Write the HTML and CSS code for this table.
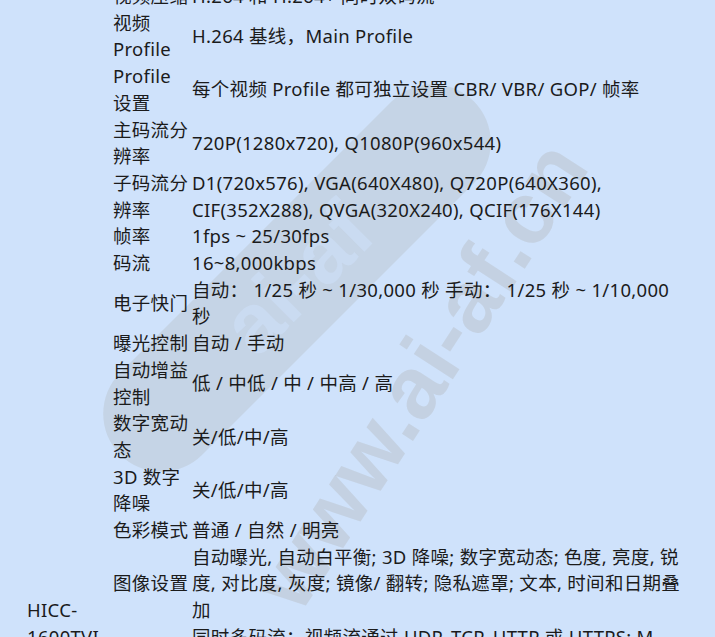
FILE: index.html
```html
<!DOCTYPE html>
<html lang="zh-CN">
<head>
  <meta charset="UTF-8">
  <meta name="viewport" content="width=device-width, initial-scale=1.0">
  <title>HICC-1600TVI 规格</title>
  <link rel="stylesheet" href="styles.css">
</head>
<body>
  <div class="page">
    <div class="watermark" aria-hidden="true">
      <div class="wm-badge"><span>ai-af</span></div>
      <div class="wm-text">www.ai-af.cn</div>
    </div>

    <table class="spec">
      <colgroup>
        <col class="col-model">
        <col class="col-label">
        <col class="col-value">
      </colgroup>
      <tr>
        <td class="model" rowspan="40">HICC-1600TVI</td>
        <td class="label">视频压缩</td>
        <td class="value">H.264 和 H.264+ 同时双码流</td>
      </tr>
      <tr>
        <td class="label">视频 Profile</td>
        <td class="value">H.264 基线，Main Profile</td>
      </tr>
      <tr>
        <td class="label">Profile 设置</td>
        <td class="value">每个视频 Profile 都可独立设置 CBR/ VBR/ GOP/ 帧率</td>
      </tr>
      <tr>
        <td class="label">主码流分辨率</td>
        <td class="value">720P(1280x720), Q1080P(960x544)</td>
      </tr>
      <tr>
        <td class="label">子码流分辨率</td>
        <td class="value">D1(720x576), VGA(640X480), Q720P(640X360), CIF(352X288), QVGA(320X240), QCIF(176X144)</td>
      </tr>
      <tr>
        <td class="label">帧率</td>
        <td class="value">1fps ~ 25/30fps</td>
      </tr>
      <tr>
        <td class="label">码流</td>
        <td class="value">16~8,000kbps</td>
      </tr>
      <tr>
        <td class="label">电子快门</td>
        <td class="value">自动： 1/25 秒 ~ 1/30,000 秒 手动： 1/25 秒 ~ 1/10,000 秒</td>
      </tr>
      <tr>
        <td class="label">曝光控制</td>
        <td class="value">自动 / 手动</td>
      </tr>
      <tr>
        <td class="label">自动增益控制</td>
        <td class="value">低 / 中低 / 中 / 中高 / 高</td>
      </tr>
      <tr>
        <td class="label">数字宽动态</td>
        <td class="value">关/低/中/高</td>
      </tr>
      <tr>
        <td class="label">3D 数字降噪</td>
        <td class="value">关/低/中/高</td>
      </tr>
      <tr>
        <td class="label">色彩模式</td>
        <td class="value">普通 / 自然 / 明亮</td>
      </tr>
      <tr>
        <td class="label">图像设置</td>
        <td class="value">自动曝光, 自动白平衡; 3D 降噪; 数字宽动态; 色度, 亮度, 锐度, 对比度, 灰度; 镜像/ 翻转; 隐私遮罩; 文本, 时间和日期叠加</td>
      </tr>
      <tr>
        <td class="label">视频流</td>
        <td class="value">同时多码流：视频流通过 UDP, TCP, HTTP 或 HTTPS; M-JPEG 视频流通过 HTTP 或 HTTPS; 最多支持 10 个用户同时访问, 支持 ONVIF 协议</td>
      </tr>
      <tr><td class="label">视频输出</td><td class="value">1Vp-p 复合输出 (75Ω/BNC)</td></tr>
      <tr><td class="label">网络协议</td><td class="value">TCP/IP, HTTP, DHCP, DNS, RTP, RTSP, NTP</td></tr>
      <tr><td class="label">安全</td><td class="value">用户认证, IP 地址过滤</td></tr>
      <tr><td class="label">音频压缩</td><td class="value">G.711</td></tr>
      <tr><td class="label">音频输入</td><td class="value">1 路</td></tr>
      <tr><td class="label">音频输出</td><td class="value">1 路</td></tr>
      <tr><td class="label">报警输入</td><td class="value">1 路</td></tr>
      <tr><td class="label">报警输出</td><td class="value">1 路</td></tr>
      <tr><td class="label">存储</td><td class="value">Micro SD 卡, 最大 128GB</td></tr>
      <tr><td class="label">网络接口</td><td class="value">RJ45 10M/100M 自适应</td></tr>
      <tr><td class="label">电源</td><td class="value">12 VDC ± 10%, PoE</td></tr>
      <tr><td class="label">功耗</td><td class="value">最大 6 W</td></tr>
      <tr><td class="label">工作温度</td><td class="value">-10°C ~ +60°C</td></tr>
      <tr><td class="label">工作湿度</td><td class="value">10% ~ 90% 无冷凝</td></tr>
      <tr><td class="label">防护等级</td><td class="value">IP66</td></tr>
      <tr><td class="label">外壳材料</td><td class="value">金属</td></tr>
      <tr><td class="label">安装方式</td><td class="value">壁装 / 吊装</td></tr>
      <tr><td class="label">尺寸</td><td class="value">110 x 95 mm</td></tr>
      <tr><td class="label">重量</td><td class="value">约 450 g</td></tr>
      <tr><td class="label">认证</td><td class="value">CE, FCC</td></tr>
      <tr><td class="label">红外距离</td><td class="value">最远 30 m</td></tr>
    </table>
  </div>
</body>
</html>
```

FILE: styles.css
```css
body {
  margin: 0;
  background: #cfe2fb;
  color: #1b1b1b;
  font-family: "Noto Sans", "Noto Sans CJK SC", sans-serif;
}
.page {
  position: relative;
  width: 715px;
  height: 637px;
  overflow: hidden;
}
/* spec table */
.spec {
  position: relative;
  z-index: 1;
  width: 683px;
  margin-top: -17px;
  border-collapse: collapse;
  table-layout: fixed;
  font-size: 18.5px;
  line-height: 26.7px;
  letter-spacing: 0.3px;
}
.col-model {
  width: 113px;
}
.col-label {
  width: 79px;
}
.spec td {
  padding: 0;
  vertical-align: middle;
}
.spec .model {
  padding-left: 27px;
}
/* watermark */
.watermark {
  position: absolute;
  top: 0;
  left: 0;
  width: 100%;
  height: 100%;
  pointer-events: none;
}
.wm-badge {
  position: absolute;
  left: 47px;
  top: 220px;
  width: 500px;
  height: 116px;
  border-radius: 58px;
  background: rgba(166, 163, 155, 0.22);
  transform: rotate(-45deg);
  display: flex;
  align-items: center;
  justify-content: center;
  font-family: "Liberation Sans", sans-serif;
  font-weight: bold;
  font-size: 84px;
  color: rgba(207, 226, 251, 0.5);
}
.wm-text {
  position: absolute;
  left: 150px;
  top: 325px;
  width: 540px;
  height: 100px;
  line-height: 100px;
  text-align: center;
  font-family: "Liberation Sans", sans-serif;
  font-weight: bold;
  font-size: 88px;
  color: rgba(166, 163, 155, 0.26);
  transform: rotate(-57deg);
}
```
